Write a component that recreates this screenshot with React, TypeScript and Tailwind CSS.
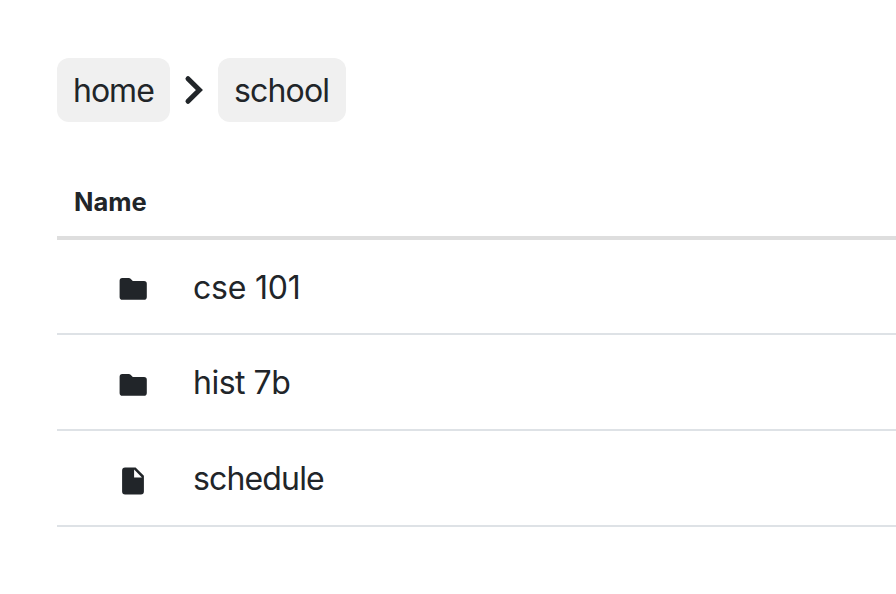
import React from "react";

const Folder = () => (
  <svg width="32" height="32" viewBox="0 0 32 32" fill="#212529" className="block">
    <path d="M5.2 5h6.6c.7 0 1.3.3 1.8.7L15.8 8h11.2A2.8 2.8 0 0 1 29.8 10.8v13.1a2.8 2.8 0 0 1-2.8 2.8H5.4a2.8 2.8 0 0 1-2.8-2.8V7.8A2.8 2.8 0 0 1 5.2 5Z" />
  </svg>
);

const File = () => (
  <svg width="32" height="32" viewBox="0 0 32 32" fill="#212529" className="block">
    <path fillRule="evenodd" d="M8.1 2.4h10.5l8.3 8.3v15.7a3 3 0 0 1-3 3H8.1a3 3 0 0 1-3-3V5.4a3 3 0 0 1 3-3Zm9 2.2v7.9h7.8Z" />
  </svg>
);

const rows = [
  { name: "cse 101", icon: <Folder />, height: "h-[95px]", text: "tracking-[-0.2px]" },
  { name: "hist 7b", icon: <Folder />, height: "h-24", text: "tracking-[-0.5px]" },
  { name: "schedule", icon: <File />, height: "h-24", text: "tracking-[-0.85px]" },
];

export default function App() {
  return (
    <main className="h-[594px] w-[896px] overflow-hidden bg-white pl-[57px] pt-[58px] font-['Inter',sans-serif] font-[430] text-[#212529]">
      <nav className="flex h-16 items-center">
        <a className="flex h-16 w-[113px] items-center rounded-xl bg-[#f0f0f0] pl-4 pt-0.5 text-[32px] tracking-[-1px]">home</a>
        <span className="flex w-12 justify-center">
          <svg width="20" height="30" viewBox="0 0 20 30" fill="none" stroke="#212529" strokeWidth="5" strokeLinecap="round">
            <path d="m4 3.7 11.4 11.3L4 26.3" />
          </svg>
        </span>
        <a className="flex h-16 w-32 items-center rounded-xl bg-[#f0f0f0] pl-4 pt-0.5 text-[32px] tracking-[-0.85px]">school</a>
      </nav>
      <section className="mt-[46px]">
        <header className="flex h-[72px] items-center border-b-4 border-[#dedede] pl-[17px] text-[25.5px] font-bold">Name</header>
        {rows.map((row) => (
          <div key={row.name} className={`flex items-center border-b-2 border-[#dee2e6] ${row.height}`}>
            <span className="ml-[60px] w-[76px] pt-[5px]">{row.icon}</span>
            <span className={`pt-0.5 text-[32px] ${row.text}`}>{row.name}</span>
          </div>
        ))}
      </section>
    </main>
  );
}
